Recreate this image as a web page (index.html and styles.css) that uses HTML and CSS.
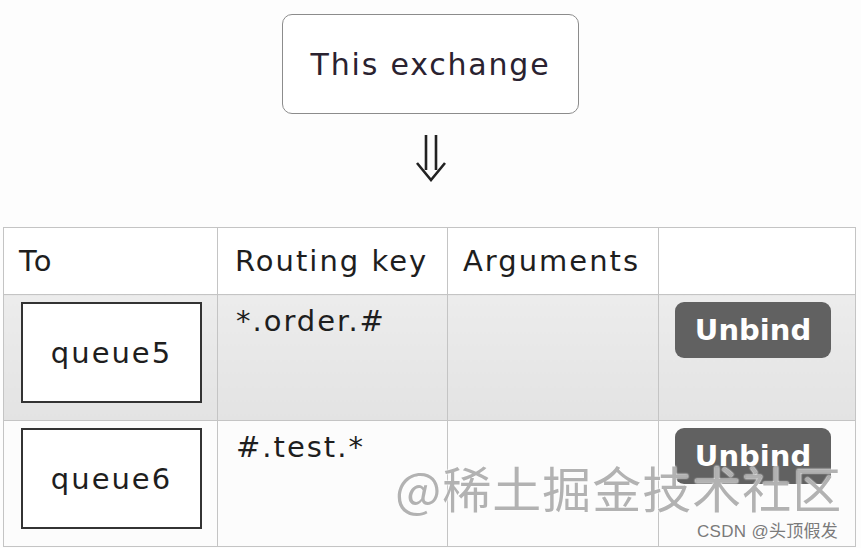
FILE: index.html
```html
<!DOCTYPE html>
<html lang="en">
<head>
  <meta charset="UTF-8">
  <title>Exchange bindings</title>
  <link rel="stylesheet" href="styles.css">
</head>
<body>
  <div class="page">
    <div class="source">
      <div class="exchange-box">This exchange</div>
      <svg class="arrow" width="34" height="47" viewBox="0 0 34 47">
        <path d="M12 0 V35 M22 0 V35 M3 28 L17 45 L31 28" fill="none" stroke="#222" stroke-width="2.6"/>
      </svg>
    </div>

    <table class="bindings">
      <colgroup>
        <col class="w-to">
        <col class="w-key">
        <col class="w-args">
        <col class="w-act">
      </colgroup>
      <thead>
        <tr>
          <th class="col-to">To</th>
          <th class="col-key">Routing key</th>
          <th class="col-args">Arguments</th>
          <th></th>
        </tr>
      </thead>
      <tbody>
        <tr class="alt">
          <td><div class="queue">queue5</div></td>
          <td class="key">*.order.#</td>
          <td></td>
          <td><button class="unbind">Unbind</button></td>
        </tr>
        <tr>
          <td><div class="queue">queue6</div></td>
          <td class="key">#.test.*</td>
          <td></td>
          <td><button class="unbind">Unbind</button></td>
        </tr>
      </tbody>
    </table>

    <div class="watermark">@稀土掘金技术社区</div>
    <div class="credit">CSDN @头顶假发</div>
  </div>
</body>
</html>
```

FILE: styles.css
```css
html, body {
  margin: 0;
  padding: 0;
  background-color: #fdfdfd;
  font-family: "DejaVu Sans", Verdana, sans-serif;
  color: #1e1e1e;
}

.page {
  position: relative;
  width: 861px;
  height: 548px;
  overflow: hidden;
}

.source {
  display: flex;
  flex-direction: column;
  align-items: center;
  padding-top: 14px;
}

.exchange-box {
  box-sizing: border-box;
  width: 297px;
  height: 100px;
  border: 1px solid #8c8c8c;
  border-radius: 10px;
  background-color: #fff;
  display: flex;
  align-items: center;
  justify-content: center;
  font-size: 30px;
  letter-spacing: 1.8px;
  color: #2a2230;
}

.arrow {
  margin-top: 21px;
}

.bindings {
  margin-top: 45px;
  margin-left: 3px;
  width: 852px;
  table-layout: fixed;
  border-collapse: collapse;
  font-size: 29px;
  letter-spacing: 2px;
}

.w-to { width: 214px; }
.w-key { width: 230px; }
.w-args { width: 211px; }
.w-act { width: 197px; }

.bindings th,
.bindings td {
  border: 1px solid #c4c4c4;
  padding: 0;
  text-align: left;
  vertical-align: top;
}

.bindings thead tr {
  height: 67px;
}

.bindings th {
  font-weight: normal;
  vertical-align: middle;
  background-color: #fff;
}

.col-to { padding-left: 15px !important; }
.col-key { padding-left: 17px !important; }
.col-args { padding-left: 15px !important; }

.bindings tbody tr {
  height: 126px;
}

.bindings td {
  background-color: #fcfcfc;
}

.bindings tr.alt td {
  background-image: linear-gradient(#ececec, #e3e3e3);
}

.queue {
  box-sizing: border-box;
  width: 181px;
  height: 101px;
  margin: 7px 0 0 17px;
  border: 2px solid #333;
  background-color: #fff;
  display: flex;
  align-items: center;
  justify-content: center;
}

.key {
  padding: 9px 0 0 18px !important;
}

.unbind {
  display: block;
  margin: 7px 0 0 16px;
  width: 156px;
  height: 56px;
  border: none;
  border-radius: 9px;
  background-color: #616161;
  color: #fff;
  font-family: "DejaVu Sans", Verdana, sans-serif;
  font-weight: bold;
  font-size: 29px;
  padding: 0;
}

.watermark {
  position: absolute;
  left: 395px;
  top: 451px;
  font-family: "Noto Sans CJK SC", sans-serif;
  font-size: 49px;
  letter-spacing: 1px;
  color: rgba(130, 130, 130, 0.62);
  text-shadow: 0 0 2px #fff, 0 0 2px #fff;
  white-space: nowrap;
}

.credit {
  position: absolute;
  left: 697px;
  top: 517px;
  font-family: "Liberation Sans", "Noto Sans CJK SC", sans-serif;
  font-size: 17px;
  letter-spacing: 0.3px;
  color: #7a7a7a;
  text-shadow: 0 0 2px #fff;
  white-space: nowrap;
}
```
